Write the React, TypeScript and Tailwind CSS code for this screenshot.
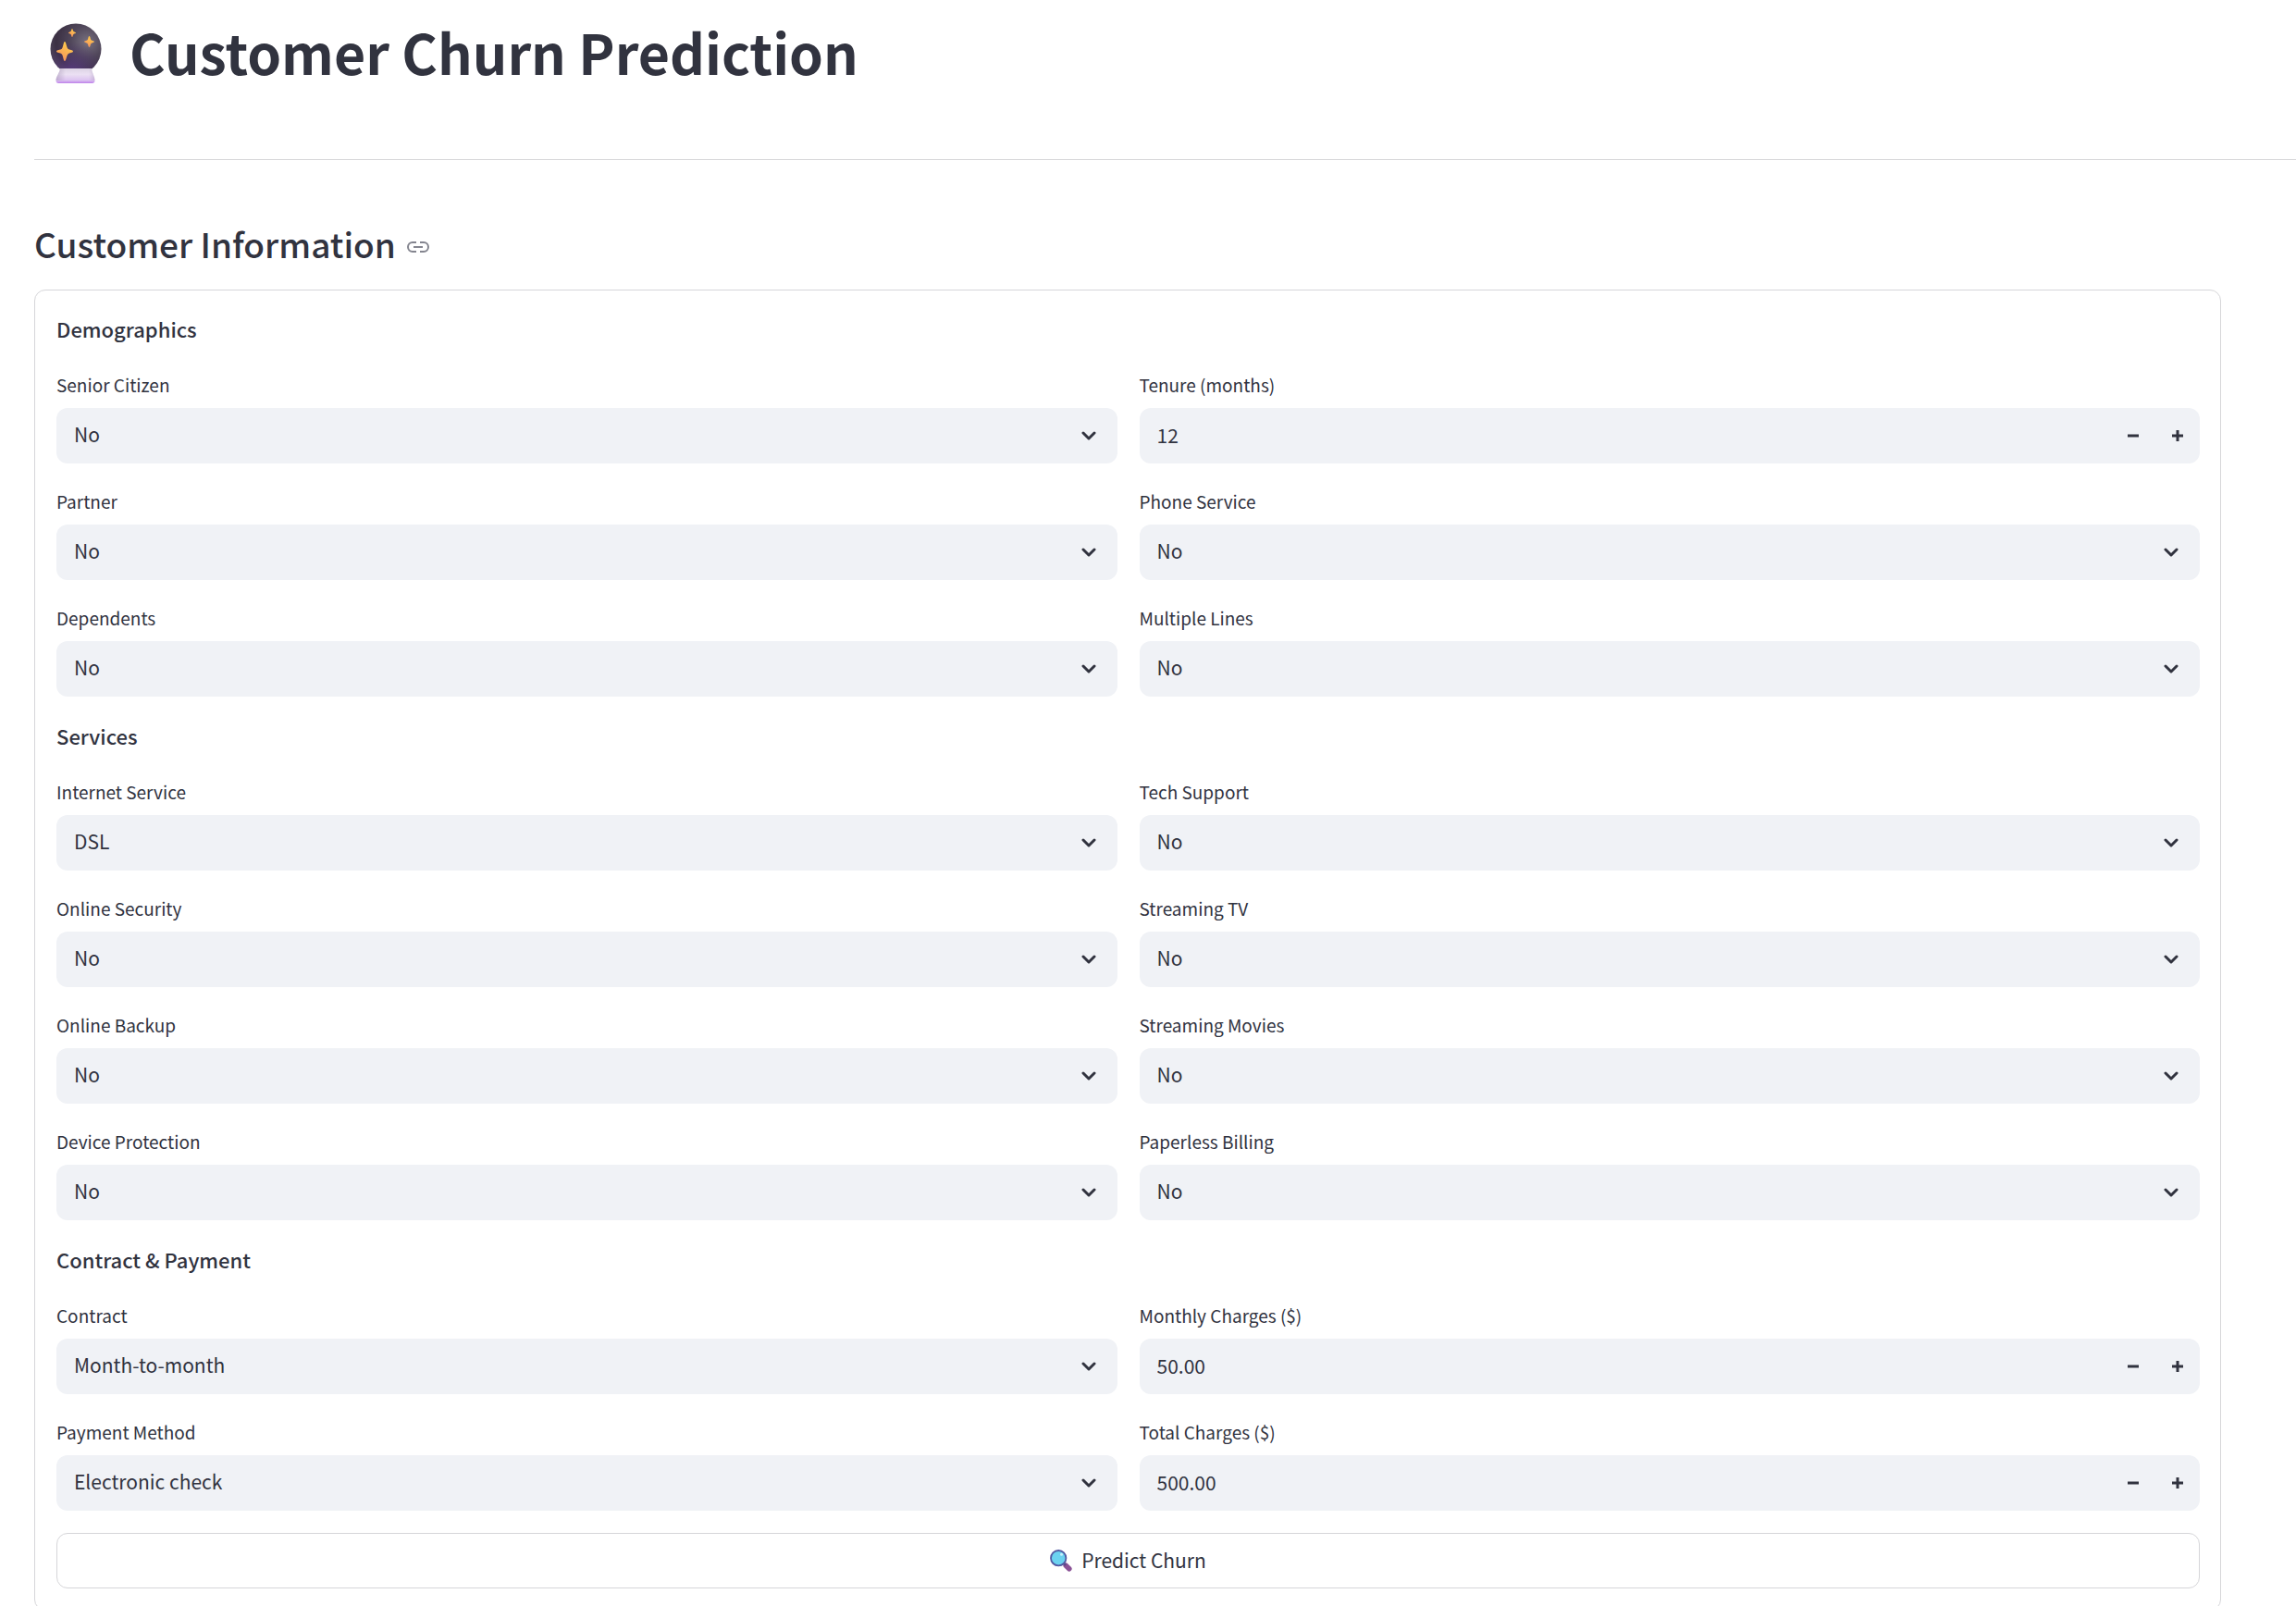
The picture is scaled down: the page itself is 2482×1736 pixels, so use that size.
import { useId } from "react";
import type { ReactNode } from "react";

type FieldSpec = { label: string; value: string; kind?: "number"; options?: string[] };

const YES_NO = ["No", "Yes"];

const sections: { title: string; fields: FieldSpec[] }[] = [
  {
    title: "Demographics",
    fields: [
      { label: "Senior Citizen", value: "No" },
      { label: "Tenure (months)", value: "12", kind: "number" },
      { label: "Partner", value: "No" },
      { label: "Phone Service", value: "No" },
      { label: "Dependents", value: "No" },
      { label: "Multiple Lines", value: "No" },
    ],
  },
  {
    title: "Services",
    fields: [
      { label: "Internet Service", value: "DSL", options: ["DSL", "Fiber optic", "No"] },
      { label: "Tech Support", value: "No" },
      { label: "Online Security", value: "No" },
      { label: "Streaming TV", value: "No" },
      { label: "Online Backup", value: "No" },
      { label: "Streaming Movies", value: "No" },
      { label: "Device Protection", value: "No" },
      { label: "Paperless Billing", value: "No" },
    ],
  },
  {
    title: "Contract & Payment",
    fields: [
      { label: "Contract", value: "Month-to-month", options: ["Month-to-month", "One year", "Two year"] },
      { label: "Monthly Charges ($)", value: "50.00", kind: "number" },
      {
        label: "Payment Method",
        value: "Electronic check",
        options: ["Electronic check", "Mailed check", "Bank transfer", "Credit card"],
      },
      { label: "Total Charges ($)", value: "500.00", kind: "number" },
    ],
  },
];

function CrystalBall() {
  return (
    <svg viewBox="0 0 56 66" className="h-[66px] w-14 shrink-0" aria-hidden="true">
      <defs>
        <radialGradient id="glass" cx="0.72" cy="0.36" r="0.72">
          <stop offset="0" stopColor="#77707f" />
          <stop offset="0.45" stopColor="#50475a" />
          <stop offset="0.85" stopColor="#3b3043" />
          <stop offset="1" stopColor="#4a4054" />
        </radialGradient>
        <radialGradient id="glow" cx="0.42" cy="1" r="0.65">
          <stop offset="0" stopColor="#5f3f8c" stopOpacity="0.95" />
          <stop offset="1" stopColor="#4a2f68" stopOpacity="0" />
        </radialGradient>
        <linearGradient id="stand" x1="0" y1="0" x2="0" y2="1">
          <stop offset="0" stopColor="#dcd3e4" />
          <stop offset="0.4" stopColor="#ebe0f3" />
          <stop offset="0.8" stopColor="#dcc3f0" />
          <stop offset="1" stopColor="#bd7eea" />
        </linearGradient>
        <linearGradient id="standSide" x1="0" y1="0" x2="1" y2="0">
          <stop offset="0" stopColor="#a898b8" stopOpacity="0.6" />
          <stop offset="0.25" stopColor="#a898b8" stopOpacity="0" />
          <stop offset="0.85" stopColor="#a898b8" stopOpacity="0" />
          <stop offset="1" stopColor="#a898b8" stopOpacity="0.4" />
        </linearGradient>
        <linearGradient id="spark" x1="0.7" y1="0" x2="0.2" y2="1">
          <stop offset="0" stopColor="#ffd04a" />
          <stop offset="1" stopColor="#f58f5e" />
        </linearGradient>
      </defs>
      <circle cx="28" cy="28" r="27.5" fill="url(#glass)" />
      <circle cx="28" cy="28" r="27.5" fill="url(#glow)" />
      <path d="M11 49H45C45.6 54 48.5 57.5 48.5 62C48.5 64.2 47.4 65 45.5 65H9.5C7.6 65 6.5 64.2 6.5 62C6.5 57.5 10.4 54 11 49Z" fill="url(#stand)" />
      <path d="M11 49H45C45.6 54 48.5 57.5 48.5 62H6.5C6.5 57.5 10.4 54 11 49Z" fill="url(#standSide)" />
      <g fill="url(#spark)">
        <path d="M16 20C17.5 20 18 26.6 19.5 27.8C21 29 25 29 25 30.5C25 32 21 32 19.5 33.5C18 35 17.5 41 16 41C14.5 41 14.3 35 12.8 33.5C11.3 32 7 32 7 30.5C7 29 11.3 29 12.8 27.8C14.3 26.6 14.5 20 16 20Z" />
        <path d="M42.5 14C43.5 14 43.6 17.4 44.5 18.2C45.4 19 48 19.2 48 20C48 20.8 45.4 21 44.5 22C43.6 23 43.5 26 42.5 26C41.5 26 41.4 23 40.5 22C39.6 21 37 20.8 37 20C37 19.2 39.6 19 40.5 18.2C41.4 17.4 41.5 14 42.5 14Z" />
        <path d="M24 6C24.7 6 24.8 8.5 25.5 9.1C26.2 9.7 28 9.8 28 10.5C28 11.2 26.2 11.3 25.5 12C24.8 12.7 24.7 15 24 15C23.3 15 23.2 12.7 22.5 12C21.8 11.3 20 11.2 20 10.5C20 9.8 21.8 9.7 22.5 9.1C23.2 8.5 23.3 6 24 6Z" />
      </g>
    </svg>
  );
}

function Magnifier() {
  return (
    <svg viewBox="0 0 24 24" className="size-6 shrink-0" aria-hidden="true">
      <path d="M17.2 17.2L20.8 20.8" stroke="#8b5296" strokeWidth="5.6" strokeLinecap="round" />
      <path d="M14.5 14.5L17 17" stroke="#5a4a86" strokeWidth="2.5" />
      <circle cx="9.2" cy="9.2" r="8.2" fill="#6bd2f0" stroke="#525aa3" strokeWidth="1.8" />
      <circle cx="12.5" cy="5.2" r="1.5" fill="#c9effb" />
    </svg>
  );
}

function LinkIcon() {
  return (
    <svg viewBox="0 0 24 12" className="h-3 w-6" fill="none" stroke="#84858f" strokeWidth="2" aria-hidden="true">
      <path d="M10 1H6A5 5 0 0 0 6 11H10M14 1H18A5 5 0 0 1 18 11H14M7 6H17" />
    </svg>
  );
}

function StepButton({ label, children }: { label: string; children: ReactNode }) {
  return (
    <button type="button" aria-label={label} className="flex h-full w-12 items-center justify-center text-[#31333f]">
      <svg viewBox="0 0 12 12" className="size-3" fill="none" stroke="currentColor" strokeWidth="3" aria-hidden="true">
        {children}
      </svg>
    </button>
  );
}

function Field({ label, value, kind, options = YES_NO }: FieldSpec) {
  const id = useId();
  return (
    <div className="flex min-w-0 flex-col gap-1.5">
      <label htmlFor={id} className="h-9 text-[19px]/[33px]">
        {label}
      </label>
      {kind === "number" ? (
        <div className="flex h-15 items-center overflow-hidden rounded-xl bg-[#f0f2f6]">
          <input
            id={id}
            type="number"
            defaultValue={value}
            step="any"
            className="h-full min-w-0 flex-1 appearance-none bg-transparent px-[19px] pb-[3px] text-[21px] outline-none [-moz-appearance:textfield] [&::-webkit-inner-spin-button]:appearance-none"
          />
          <StepButton label={`Decrease ${label}`}>
            <path d="M0 6H12" />
          </StepButton>
          <StepButton label={`Increase ${label}`}>
            <path d="M0 6H12M6 0V12" />
          </StepButton>
        </div>
      ) : (
        <div className="relative h-15">
          <select
            id={id}
            defaultValue={value}
            className="size-full appearance-none rounded-xl bg-[#f0f2f6] px-[19px] pb-[3px] text-[21px] outline-none"
          >
            {options.map((o) => (
              <option key={o}>{o}</option>
            ))}
          </select>
          <svg
            viewBox="0 0 16 10"
            className="pointer-events-none absolute top-[25px] right-[23px] h-2.5 w-4"
            fill="none"
            stroke="#31333f"
            strokeWidth="3"
            strokeLinecap="round"
            strokeLinejoin="round"
            aria-hidden="true"
          >
            <path d="M2 2L8 8L14 2" />
          </svg>
        </div>
      )}
    </div>
  );
}

export default function App() {
  return (
    <main className="min-h-screen bg-white pl-[37px] font-['Noto_Sans_CJK_SC',sans-serif] text-[#31333f]">
      <h1 className="flex h-[116px] items-center gap-[30px] pl-[17px] text-[59px]/[72px] font-bold">
        <CrystalBall />
        <span className="pb-1">Customer Churn Prediction</span>
      </h1>
      <hr className="mt-14 border-[#d6d6d9]" />
      <h3 className="mt-[62px] flex h-14 items-center gap-3 text-[37px]/[56px] font-medium">
        Customer Information
        <a href="#customer-information" aria-label="Link to heading" className="pt-2">
          <LinkIcon />
        </a>
      </h3>
      <form
        id="customer-information"
        className="mt-[22px] mr-[81px] flex flex-col gap-6 rounded-xl border border-[#d6d6d9] p-[23px] pr-[22px]"
        onSubmit={(e) => e.preventDefault()}
      >
        {sections.map((s) => (
          <section key={s.title} className="flex flex-col gap-6">
            <h4 className="h-[38px] text-[22px]/[36px] font-medium">{s.title}</h4>
            <div className="grid grid-cols-2 gap-6">
              {s.fields.map((f) => (
                <Field key={f.label} {...f} />
              ))}
            </div>
          </section>
        ))}
        <button
          type="submit"
          className="flex h-15 w-full items-center justify-center gap-2.5 rounded-xl border border-[#d6d6d9] bg-white text-[21px]"
        >
          <Magnifier />
          Predict Churn
        </button>
      </form>
    </main>
  );
}
